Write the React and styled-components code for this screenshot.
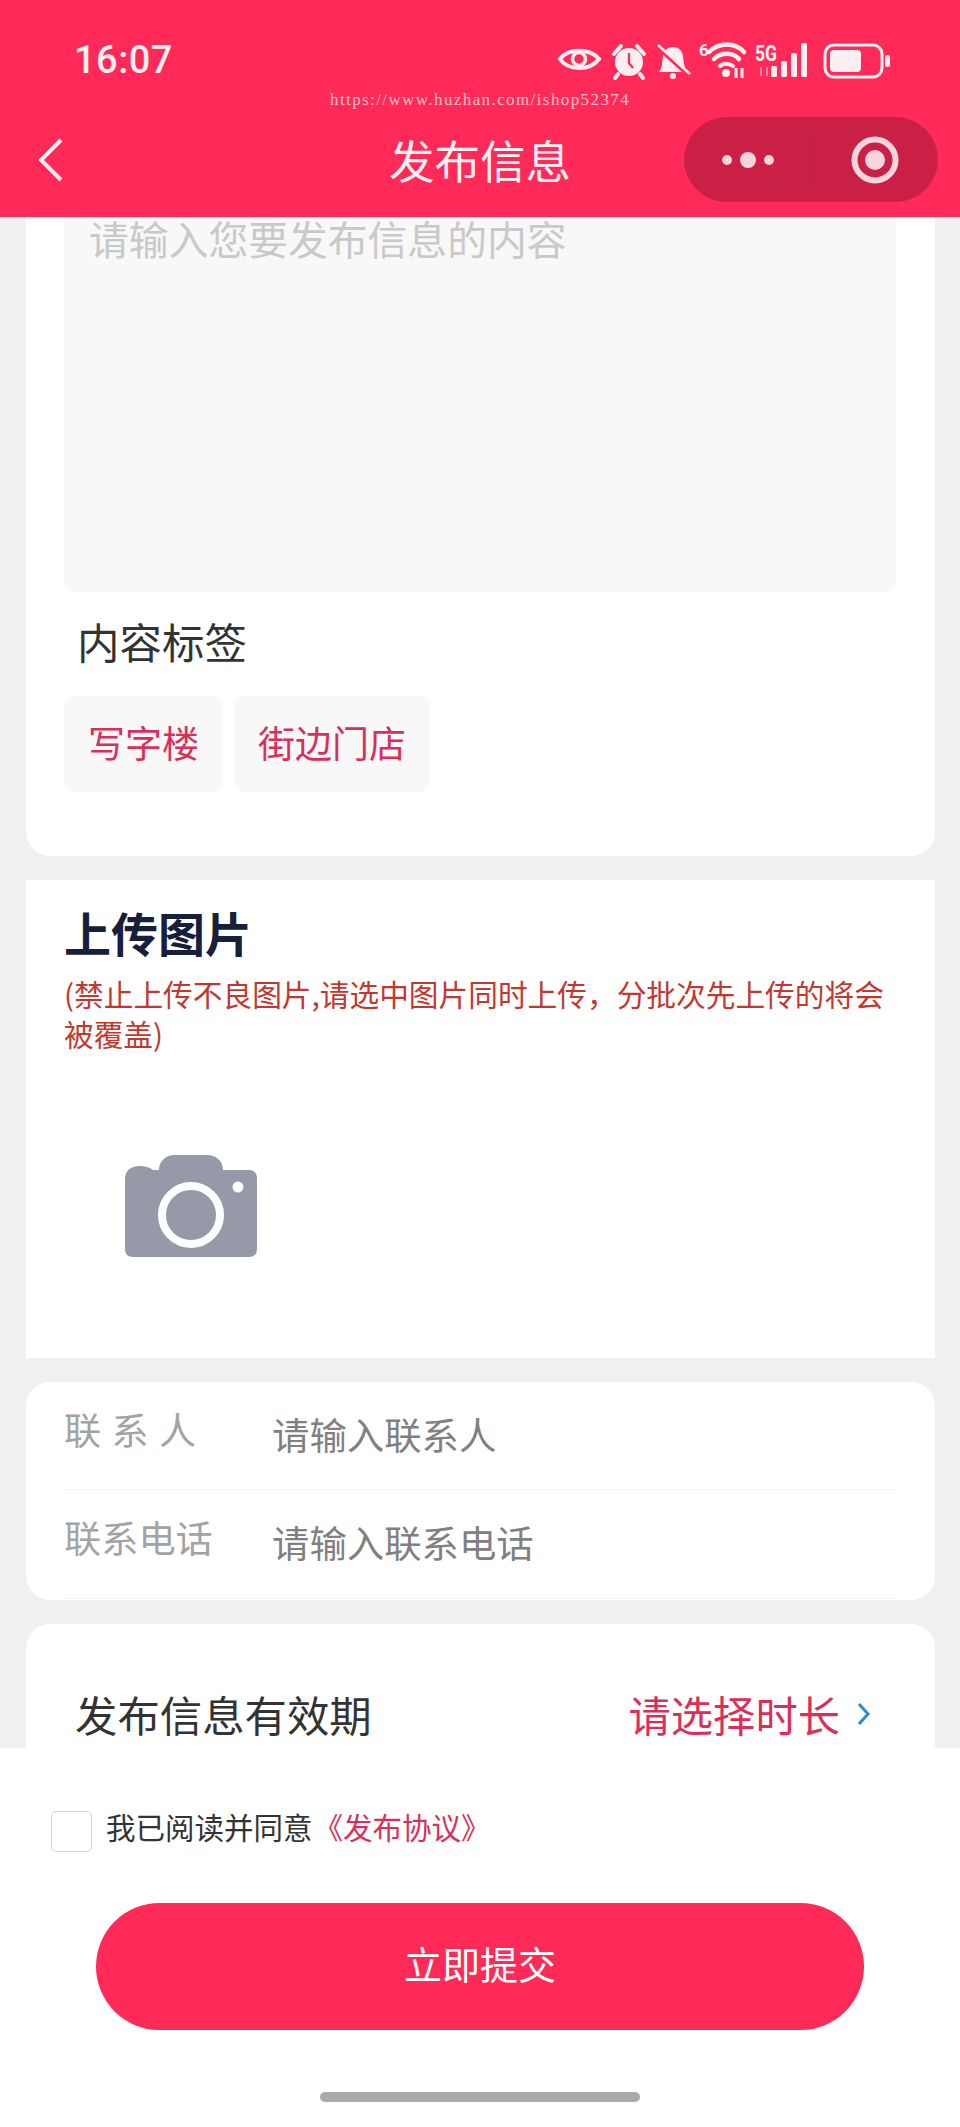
import React from "react";
import styled, { createGlobalStyle } from "styled-components";

const cjk = '"Noto Sans CJK SC", "Noto Sans", sans-serif';

const GlobalStyle = createGlobalStyle`
  html, body {
    margin: 0;
    padding: 0;
    background: #f0f0f0;
  }
  * {
    box-sizing: border-box;
  }
`;

const Page = styled.div`
  position: relative;
  display: flex;
  flex-direction: column;
  width: 960px;
  height: 2127px;
  overflow: hidden;
  background: #f0f0f0;
  font-family: ${cjk};
`;

const Header = styled.header`
  flex: none;
  height: 217px;
  background: #ff2a58;
  color: #fff;
`;

const StatusBar = styled.div`
  display: flex;
  align-items: center;
  justify-content: space-between;
  height: 117px;
  padding: 0 70px 0 74px;
`;

const Time = styled.span`
  margin-top: 2px;
  font-family: Roboto, sans-serif;
  font-size: 38px;
  font-weight: 500;
  letter-spacing: 0.5px;
  color: #fdeef2;
`;

const StatusIcons = styled.svg`
  display: block;
  margin-top: 8px;
  overflow: visible;
`;

const Watermark = styled.span`
  position: absolute;
  top: 89px;
  left: 330px;
  font-family: "Liberation Serif", serif;
  font-size: 17px;
  line-height: 22px;
  letter-spacing: 1.4px;
  color: rgba(255, 255, 255, 0.72);
`;

const NavBar = styled.div`
  display: grid;
  grid-template-columns: 1fr auto 1fr;
  align-items: center;
  height: 85px;
  padding: 0 22px;
`;

const BackIcon = styled.svg`
  display: block;
  margin-left: 17px;
`;

const Title = styled.h1`
  margin: 0;
  font-size: 45.5px;
  font-weight: 400;
  line-height: 85px;
  color: #fdf0f3;
`;

const Capsule = styled.div`
  justify-self: end;
  display: flex;
  align-items: center;
  width: 254px;
  height: 85px;
  border-radius: 43px;
  background: #cb2046;
`;

const CapsuleSide = styled.div`
  display: flex;
  align-items: center;
  justify-content: center;
  height: 50px;
  width: ${(p) => p.$width}px;
  border-right: ${(p) => (p.$divided ? "1px solid #b91f41" : "none")};
`;

const Content = styled.main`
  flex: 1;
  min-height: 0;
  display: flex;
  flex-direction: column;
  gap: 24px;
`;

const Card = styled.section`
  flex: none;
  width: 909px;
  margin-left: 26px;
  background: #fff;
  padding: ${(p) => p.$padding || "0 39px 0 38px"};
  border-radius: ${(p) => p.$radius || "0"};
  height: ${(p) => p.$height}px;
`;

const TextArea = styled.div`
  height: 375px;
  padding-left: 25px;
  background: #f8f8f8;
  border-radius: 0 0 12px 12px;
  font-size: 39.8px;
  line-height: 42px;
  color: #c9c9c9;
`;

const FieldLabel = styled.div`
  margin: 24px 0 0 13px;
  font-size: 42.5px;
  line-height: 50px;
  color: #333;
`;

const TagRow = styled.div`
  display: flex;
  gap: 11px;
  margin-top: 30px;
`;

const Tag = styled.span`
  display: flex;
  align-items: center;
  height: 96px;
  padding: 0 24px 5px;
  border-radius: 10px;
  background: #f8f8f8;
  font-size: 37px;
  color: #d8305a;
`;

const SectionTitle = styled.h2`
  margin: 0;
  padding-top: 22px;
  font-size: 47px;
  font-weight: 700;
  line-height: 60px;
  color: #17203a;
`;

const Note = styled.p`
  margin: 12px 0 0;
  font-size: 29.7px;
  line-height: 40px;
  color: #c0392f;
`;

const CameraIcon = styled.svg`
  display: block;
  margin: 101px 0 0 61px;
`;

const ContactRow = styled.div`
  display: flex;
  align-items: center;
  height: ${(p) => p.$height}px;
  border-bottom: 1px solid #f3f3f3;
`;

const ContactLabel = styled.span`
  flex: none;
  width: 208px;
  margin-bottom: 14px;
  font-size: 37.2px;
  word-spacing: 2px;
  color: #a3a3a3;
`;

const ContactInput = styled.span`
  margin-bottom: 4px;
  font-size: 37.4px;
  color: #808080;
`;

const ValidityRow = styled.div`
  display: flex;
  align-items: center;
  justify-content: space-between;
  padding-top: 60px;
  line-height: 60px;
`;

const ValidityLabel = styled.span`
  font-size: 42.4px;
  color: #333;
`;

const ValidityValue = styled.span`
  display: flex;
  align-items: center;
  gap: 17px;
  font-size: 42.3px;
  color: #d8305a;
`;

const Footer = styled.footer`
  flex: none;
  height: 379px;
  padding-top: 63px;
  background: #fff;
`;

const Agreement = styled.div`
  display: flex;
  align-items: flex-start;
  padding-left: 51px;
`;

const CheckBox = styled.span`
  flex: none;
  width: 41px;
  height: 41px;
  margin-right: 14px;
  border: 1px solid #d6d6d6;
  border-radius: 5px;
  background: #fff;
`;

const AgreementText = styled.span`
  font-size: 29.5px;
  line-height: 30px;
  color: #333;
`;

const AgreementLink = styled.span`
  margin-left: 1px;
  color: #d8305a;
`;

const SubmitButton = styled.button`
  display: block;
  width: 768px;
  height: 127px;
  margin: 51px auto 0;
  padding: 0 0 8px;
  border: none;
  border-radius: 64px;
  background: #ff2a58;
  color: #fff;
  font-family: ${cjk};
  font-size: 38px;
`;

const HomeBar = styled.div`
  width: 320px;
  height: 10px;
  margin: 62px auto 0;
  border-radius: 5px;
  background: #aaaaaa;
`;

function StatusGlyphs() {
  return (
    <StatusIcons width="332" height="40" viewBox="0 0 332 40" fill="none">
      {/* eye */}
      <path d="M2 16 C10 5 32 5 41 16 C32 28 10 28 2 16 Z" stroke="#fdeef2" strokeWidth="4" />
      <circle cx="21" cy="16" r="6.5" stroke="#fdeef2" strokeWidth="3.5" />
      {/* alarm */}
      <circle cx="71" cy="19" r="14" fill="#fdeef2" />
      <path d="M71 10 V20 L75 25" stroke="#ff2a58" strokeWidth="2.2" />
      <path d="M56 11 L63 3 M86 11 L79 3 M60 31 L57 35 M82 31 L85 35" stroke="#fdeef2" strokeWidth="4" strokeLinecap="round" />
      {/* bell, muted */}
      <path d="M101 29 C105 24 104 17 105 13 C106 7 110 4 115 4 C120 4 124 7 125 13 C126 18 125 24 130 29 Z" fill="#fdeef2" />
      <circle cx="115" cy="33" r="3" fill="#fdeef2" />
      <path d="M100 4 L132 33" stroke="#ff2a58" strokeWidth="5" />
      <path d="M100 2 L132 31" stroke="#fdeef2" strokeWidth="2.5" />
      {/* wifi */}
      <text x="141" y="13" fontFamily="Roboto, sans-serif" fontSize="17" fontWeight="700" fill="#fdeef2">6</text>
      <g transform="translate(0 -3)">
        <path d="M151 12 C161 2 177 2 186 12" stroke="#fdeef2" strokeWidth="4.5" strokeLinecap="round" />
        <path d="M156 19 C163 12 175 12 181 19" stroke="#fdeef2" strokeWidth="4.5" strokeLinecap="round" />
        <path d="M162 26 C165 23 171 23 175 26" stroke="#fdeef2" strokeWidth="4" strokeLinecap="round" />
        <circle cx="168" cy="33" r="4" fill="#fdeef2" />
        <path d="M178 28 V38 M184 28 V38" stroke="#fdeef2" strokeWidth="3" />
      </g>
      {/* 5G and signal */}
      <text x="197" y="18" fontFamily="Roboto, sans-serif" fontSize="22" fontWeight="700" fill="#fdeef2" textLength="22" lengthAdjust="spacingAndGlyphs">5G</text>
      <g transform="translate(0 -4)">
        <path d="M203 28 V37 M209 28 V37" stroke="#ff8ba5" strokeWidth="2" />
        <rect x="213" y="27" width="6" height="11" rx="1.5" fill="#fdeef2" />
        <rect x="223" y="22" width="6" height="16" rx="1.5" fill="#fdeef2" />
        <rect x="233" y="14" width="6" height="24" rx="1.5" fill="#fdeef2" />
        <rect x="243" y="4" width="6" height="34" rx="1.5" fill="#fdeef2" />
      </g>
      {/* battery */}
      <g transform="translate(0 -3)">
        <rect x="267" y="5" width="57" height="32" rx="9" stroke="#fdeef2" strokeWidth="3" />
        <rect x="272" y="10" width="31" height="22" rx="4" fill="#fdeef2" />
        <rect x="327" y="15" width="5" height="12" rx="2.5" fill="#fdeef2" />
      </g>
    </StatusIcons>
  );
}

function App() {
  return (
    <Page>
      <GlobalStyle />
      <Header>
        <StatusBar>
          <Time>16:07</Time>
          <StatusGlyphs />
        </StatusBar>
        <Watermark>https://www.huzhan.com/ishop52374</Watermark>
        <NavBar>
          <BackIcon width="24" height="44" viewBox="0 0 24 44" fill="none">
            <path d="M22 2 L2 22 L22 42" stroke="#fdf0f3" strokeWidth="4" />
          </BackIcon>
          <Title>发布信息</Title>
          <Capsule>
            <CapsuleSide $width={127} $divided>
              <svg width="54" height="20" viewBox="0 0 54 20">
                <circle cx="7" cy="10" r="5" fill="#f8d5dd" />
                <circle cx="28" cy="10" r="8" fill="#f8d5dd" />
                <circle cx="49" cy="10" r="5" fill="#f8d5dd" />
              </svg>
            </CapsuleSide>
            <CapsuleSide $width={127}>
              <svg width="48" height="48" viewBox="0 0 48 48" fill="none">
                <circle cx="24" cy="24" r="20.5" stroke="#f8d5dd" strokeWidth="6" />
                <circle cx="24" cy="24" r="10" fill="#f8d5dd" />
              </svg>
            </CapsuleSide>
          </Capsule>
        </NavBar>
      </Header>

      <Content>
        <Card $radius="0 0 24px 24px" $height={639}>
          <TextArea>请输入您要发布信息的内容</TextArea>
          <FieldLabel>内容标签</FieldLabel>
          <TagRow>
            <Tag>写字楼</Tag>
            <Tag>街边门店</Tag>
          </TagRow>
        </Card>

        <Card $height={478}>
          <SectionTitle>上传图片</SectionTitle>
          <Note>(禁止上传不良图片,请选中图片同时上传，分批次先上传的将会被覆盖)</Note>
          <CameraIcon width="132" height="102" viewBox="0 0 132 102">
            <path
              d="M0 24 C0 16 6 11 14 11 C20 11 24 12 28 15 L34 15 C34 6 41 0 50 0 L82 0 C91 0 98 6 98 15 L124 15 C129 15 132 18 132 23 L132 94 C132 99 129 102 124 102 L8 102 C3 102 0 99 0 94 Z"
              fill="#9599a8"
            />
            <circle cx="66" cy="60" r="29" fill="none" stroke="#fff" strokeWidth="8" />
            <circle cx="113" cy="32" r="5.5" fill="#fff" />
          </CameraIcon>
        </Card>

        <Card $radius="24px" $height={218}>
          <ContactRow $height={108}>
            <ContactLabel>联 系 人</ContactLabel>
            <ContactInput>请输入联系人</ContactInput>
          </ContactRow>
          <ContactRow $height={109}>
            <ContactLabel>联系电话</ContactLabel>
            <ContactInput>请输入联系电话</ContactInput>
          </ContactRow>
        </Card>

        <Card $radius="24px 24px 0 0" $padding="0 65px 0 49px" $height={124}>
          <ValidityRow>
            <ValidityLabel>发布信息有效期</ValidityLabel>
            <ValidityValue>
              请选择时长
              <svg width="13" height="24" viewBox="0 0 13 24" fill="none">
                <path d="M2 2 L11 12 L2 22" stroke="#2e8bc9" strokeWidth="3" />
              </svg>
            </ValidityValue>
          </ValidityRow>
        </Card>
      </Content>

      <Footer>
        <Agreement>
          <CheckBox />
          <AgreementText>
            我已阅读并同意<AgreementLink>《发布协议》</AgreementLink>
          </AgreementText>
        </Agreement>
        <SubmitButton>立即提交</SubmitButton>
        <HomeBar />
      </Footer>
    </Page>
  );
}

export default App;
